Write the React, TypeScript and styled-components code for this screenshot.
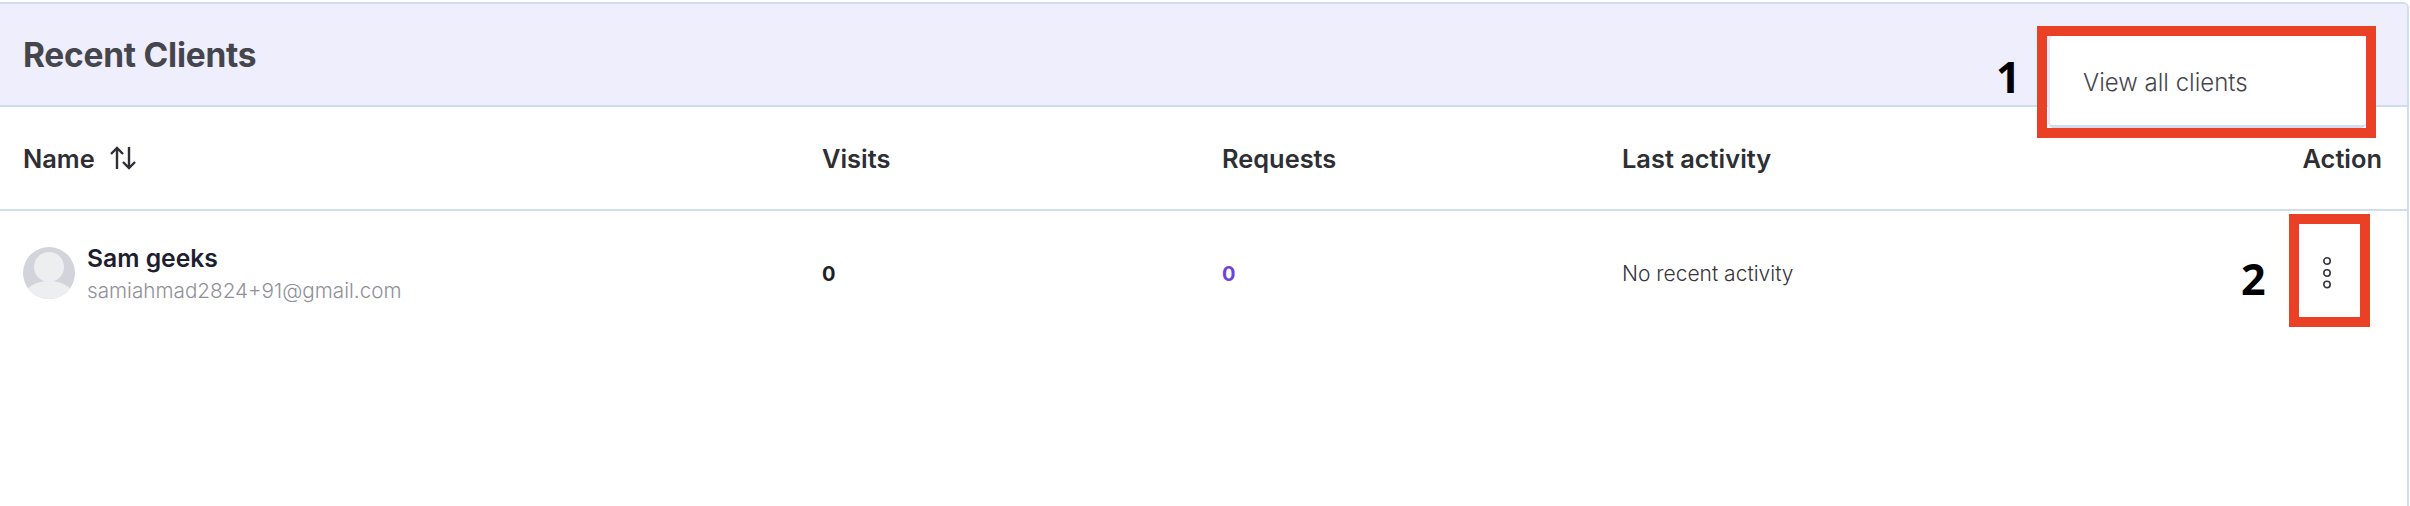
import React from "react";
import styled, { createGlobalStyle } from "styled-components";

const Global = createGlobalStyle`
  html, body { margin: 0; padding: 0; background: #fff; }
  body { font-family: Inter, "Noto Sans", sans-serif; }
  * { box-sizing: border-box; }
`;

const Page = styled.div`
  position: relative;
  width: 2410px;
  height: 506px;
  padding-top: 2px;
  overflow: hidden;
`;

const Card = styled.section`
  height: 504px;
  margin-right: 1px;
  border-top: 2px solid #d0ddf0;
  border-right: 2px solid #d0ddf0;
  border-top-right-radius: 6px;
`;

const CardHeader = styled.header`
  height: 103px;
  padding: 0 23px;
  display: flex;
  align-items: center;
  background: #eeeefc;
  border-bottom: 2px solid #d0ddf0;
  border-top-right-radius: 4px;
`;

const Title = styled.h2`
  margin: 0;
  font-size: 33.5px;
  font-weight: 700;
  letter-spacing: -0.25px;
  color: #45464d;
`;

const Row = styled.div<{ $height: number; $divider?: boolean }>`
  height: ${(p) => p.$height}px;
  padding: 0 25px 0 23px;
  display: grid;
  grid-template-columns: 799px 400px 400px 1fr auto;
  align-items: center;
  ${(p) => (p.$divider ? "border-bottom: 2px solid #d0ddf0;" : "")}
`;

const HeadCell = styled.div`
  display: flex;
  align-items: center;
  gap: 14px;
  font-size: 25.4px;
  font-weight: 600;
  color: #2e2f35;
`;

const ClientCell = styled.div`
  display: flex;
  align-items: center;
  gap: 12px;
`;

const ClientText = styled.div`
  display: flex;
  flex-direction: column;
  gap: 5px;
`;

const ClientName = styled.div`
  font-size: 24.7px;
  line-height: 30px;
  font-weight: 600;
  color: #1d1e30;
`;

const ClientEmail = styled.div`
  font-size: 20.7px;
  line-height: 26px;
  font-weight: 300;
  color: #8f9199;
`;

const Count = styled.div<{ $accent?: boolean }>`
  padding-top: 2px;
  font-size: 20px;
  font-weight: 700;
  color: ${(p) => (p.$accent ? "#6f42d8" : "#1f2025")};
`;

const Activity = styled.div`
  font-size: 21px;
  font-weight: 300;
  color: #35363c;
`;

const MenuCell = styled.div`
  display: flex;
  justify-content: flex-end;
  padding-right: 50px;
`;

const FloatingButton = styled.button`
  position: absolute;
  left: 2048px;
  top: 36px;
  width: 318px;
  height: 92px;
  padding: 3px 0 0 33px;
  background: #fff;
  border: none;
  border-left: 2px solid #e4e9f5;
  border-bottom: 3px solid #d0ddf0;
  border-radius: 5px;
  text-align: left;
  font-family: inherit;
  font-size: 24px;
  font-weight: 300;
  color: #45464d;
`;

const Highlight = styled.div<{ $x: number; $y: number; $w: number; $h: number }>`
  position: absolute;
  left: ${(p) => p.$x}px;
  top: ${(p) => p.$y}px;
  width: ${(p) => p.$w}px;
  height: ${(p) => p.$h}px;
  border: 10px solid #ea4025;
`;

const Marker = styled.span<{ $x: number; $y: number }>`
  position: absolute;
  left: ${(p) => p.$x}px;
  top: ${(p) => p.$y}px;
  font-family: "Open Sans", sans-serif;
  font-size: 43px;
  line-height: 42px;
  font-weight: 700;
  color: #000;
`;

const SortIcon = () => (
  <svg width="28" height="26" viewBox="0 0 28 26" fill="none" stroke="#2e2f35" strokeWidth="2.4">
    <path d="M8 24V3M2 9l6-6 6 6" />
    <path d="M20 2v21M14 17l6 6 6-6" />
  </svg>
);

const Avatar = () => (
  <svg width="52" height="52" viewBox="0 0 52 52">
    <defs>
      <clipPath id="avatar-clip">
        <circle cx="26" cy="26" r="26" />
      </clipPath>
    </defs>
    <g clipPath="url(#avatar-clip)">
      <rect width="52" height="52" fill="#d1d5db" />
      <circle cx="26" cy="20" r="15" fill="#eceef0" />
      <ellipse cx="26" cy="52" rx="26" ry="18" fill="#eceef0" />
    </g>
  </svg>
);

const DotsIcon = () => (
  <svg width="10" height="34" viewBox="0 0 10 34" fill="none" stroke="#35363c" strokeWidth="1.6">
    <circle cx="5" cy="5" r="3.2" />
    <circle cx="5" cy="17" r="3.2" />
    <circle cx="5" cy="28.5" r="3.2" />
  </svg>
);

export default function App() {
  return (
    <Page>
      <Global />
      <Card>
        <CardHeader>
          <Title>Recent Clients</Title>
        </CardHeader>
        <Row $height={104} $divider>
          <HeadCell>
            Name <SortIcon />
          </HeadCell>
          <HeadCell>Visits</HeadCell>
          <HeadCell>Requests</HeadCell>
          <HeadCell>Last activity</HeadCell>
          <HeadCell>Action</HeadCell>
        </Row>
        <Row $height={124}>
          <ClientCell>
            <Avatar />
            <ClientText>
              <ClientName>Sam geeks</ClientName>
              <ClientEmail>samiahmad2824+91@gmail.com</ClientEmail>
            </ClientText>
          </ClientCell>
          <Count>0</Count>
          <Count $accent>0</Count>
          <Activity>No recent activity</Activity>
          <MenuCell>
            <DotsIcon />
          </MenuCell>
        </Row>
      </Card>
      <FloatingButton>View all clients</FloatingButton>
      <Highlight $x={2037} $y={26} $w={339} $h={112} />
      <Highlight $x={2289} $y={214} $w={81} $h={113} />
      <Marker $x={1996} $y={56}>1</Marker>
      <Marker $x={2241} $y={258}>2</Marker>
    </Page>
  );
}
